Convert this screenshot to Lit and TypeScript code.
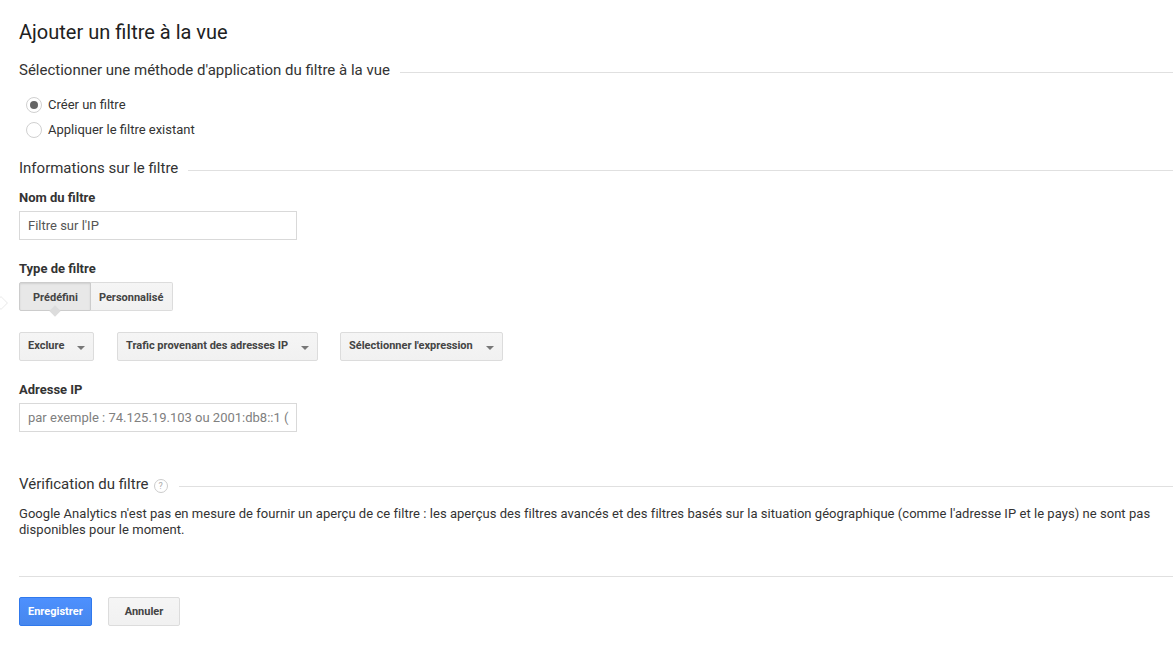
import { LitElement, html, css } from "lit";
import { customElement } from "lit/decorators.js";

const caret = html`<span class="caret"></span>`;

@customElement("app-root")
export class AppRoot extends LitElement {
  static styles = css`
    :host { display: block; height: 648px; overflow: hidden; background: #fff; font-family: Roboto, "Liberation Sans", sans-serif; color: #222; position: relative; }
    .page { padding: 19px 0 0 19px; }
    h1 { margin: 0; font-size: 20px; line-height: 26px; font-weight: 400; color: #212121; }
    .legend { display: flex; align-items: center; font-size: 15px; line-height: 20px; color: #333; }
    .legend::after { content: ""; flex: 1; height: 1px; background: #e0e0e0; margin: 4px 0 0 10px; }
    .m1 { margin-top: 15px; }
    .radios { margin: 15px 0 0 7px; display: flex; flex-direction: column; gap: 5px; }
    .radio { display: flex; align-items: center; gap: 6px; font-size: 13px; line-height: 20px; color: #333; }
    .dot { width: 14px; height: 14px; border: 1px solid #d0d0d0; border-radius: 50%; display: flex; align-items: center; justify-content: center; }
    .dot.on::after { content: ""; width: 8px; height: 8px; border-radius: 50%; background: #666; }
    .m2 { margin-top: 18px; }
    label { display: block; font-size: 13px; line-height: 18px; font-weight: 700; color: #333; }
    .input { box-sizing: border-box; width: 278px; height: 29px; border: 1px solid #d9d9d9; padding: 0 8px; font-size: 13px; line-height: 27px; color: #555; white-space: nowrap; overflow: hidden; }
    .input.ph { color: #808080; }
    .tabs { display: flex; margin-top: 4px; position: relative; width: max-content; }
    .tab { box-sizing: border-box; height: 29px; border: 1px solid #dcdcdc; background: linear-gradient(#f5f5f5, #f1f1f1); font-size: 11px; font-weight: 700; line-height: 29px; color: #444; padding: 0 9px 0 8px; border-radius: 0 2px 2px 0; border-left: 0; }
    .tab.on { background: #e8e8e8; border-left: 1px solid #ccc; border-color: #ccc; padding: 0 12px 0 13px; border-radius: 2px 0 0 2px; box-shadow: inset 0 1px 2px rgba(0,0,0,.1); position: relative; }
    .tab.on::after { content: ""; position: absolute; left: 31px; bottom: -5px; width: 8px; height: 8px; background: #dcdcdc; transform: rotate(45deg); }
    .diamond { position: absolute; left: -4px; top: 298px; width: 8px; height: 8px; border: 1px solid #eee; transform: rotate(45deg); background: #fff; }
    .drops { display: flex; margin-top: 21px; }
    .drop { box-sizing: border-box; height: 29px; border: 1px solid #dcdcdc; border-radius: 2px; background: linear-gradient(#f5f5f5, #f1f1f1); font-size: 11px; font-weight: 700; color: #444; line-height: 25px; padding: 0 11px 0 8px; display: flex; justify-content: space-between; white-space: nowrap; }
    .drop.last { padding-right: 9px; }
    .caret { width: 0; height: 0; border: 4px solid transparent; border-top-color: #777; border-bottom: 0; margin-top: 13px; margin-left: 13px; }
    .text { margin: 12px 0 0; font-size: 13px; line-height: 16px; color: #333; width: 1150px; letter-spacing: 0.043px; }
    .help { box-sizing: border-box; width: 14px; height: 14px; border: 1px solid #ccc; border-radius: 50%; font-size: 9px; color: #aaa; text-align: center; line-height: 12px; margin: 3px 1px 0 5px; }
    .rule { height: 1px; background: #e0e0e0; margin-top: 38px; }
    .actions { display: flex; gap: 16px; margin-top: 20px; }
    .btn { box-sizing: border-box; height: 29px; padding: 0 8px; border-radius: 2px; font-size: 11px; font-weight: 700; line-height: 27px; border: 1px solid #dcdcdc; background: linear-gradient(#f5f5f5, #f1f1f1); color: #444; }
    .btn.primary { background: linear-gradient(#4d90fe, #4787ed); border-color: #3079ed; color: #fff; }
    .btn.plain { padding: 0 16px; }
  `;

  render() {
    return html`
      <div class="diamond"></div>
      <div class="page">
        <h1>Ajouter un filtre à la vue</h1>
        <div class="legend m1">Sélectionner une méthode d'application du filtre à la vue</div>
        <div class="radios">
          <div class="radio"><span class="dot on"></span>Créer un filtre</div>
          <div class="radio"><span class="dot"></span>Appliquer le filtre existant</div>
        </div>
        <div class="legend m2">Informations sur le filtre</div>
        <label style="margin-top:11px">Nom du filtre</label>
        <div class="input" style="margin-top:4px">Filtre sur l'IP</div>
        <label style="margin-top:20px">Type de filtre</label>
        <div class="tabs"><div class="tab on">Prédéfini</div><div class="tab">Personnalisé</div></div>
        <div class="drops">
          <div class="drop" style="width:75px">Exclure${caret}</div>
          <div class="drop" style="width:201px;margin-left:23px">Trafic provenant des adresses IP${caret}</div>
          <div class="drop last" style="width:163px;margin-left:22px">Sélectionner l'expression${caret}</div>
        </div>
        <label style="margin-top:20px">Adresse IP</label>
        <div class="input ph" style="margin-top:4px">par exemple : 74.125.19.103 ou 2001:db8::1 (</div>
        <div class="legend" style="margin-top:42px">Vérification du filtre<span class="help">?</span></div>
        <p class="text">Google Analytics n'est pas en mesure de fournir un aperçu de ce filtre : les aperçus des filtres avancés et des filtres basés sur la situation géographique (comme l'adresse IP et le pays) ne sont pas disponibles pour le moment.</p>
        <div class="rule"></div>
        <div class="actions">
          <div class="btn primary">Enregistrer</div>
          <div class="btn plain">Annuler</div>
        </div>
      </div>
    `;
  }
}
